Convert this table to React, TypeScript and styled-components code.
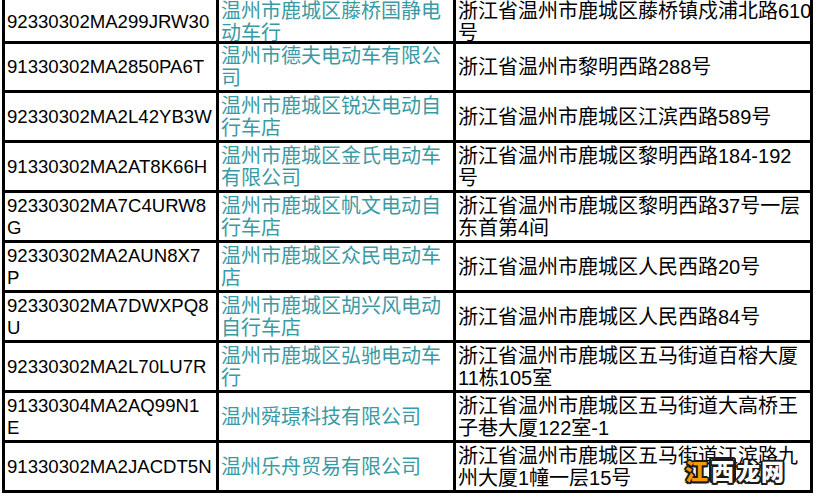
import React from 'react';
import styled, { createGlobalStyle } from 'styled-components';

interface Company {
    code: string;
    name: string;
    address: string;
}

// line breaks follow the wrapping of the original sheet
const companies: Company[] = [
    {
        code: '92330302MA299JRW30',
        name: '温州市鹿城区藤桥国静电\n动车行',
        address: '浙江省温州市鹿城区藤桥镇戍浦北路610\n号',
    },
    { code: '91330302MA2850PA6T', name: '温州市德夫电动车有限公\n司', address: '浙江省温州市黎明西路288号' },
    { code: '92330302MA2L42YB3W', name: '温州市鹿城区锐达电动自\n行车店', address: '浙江省温州市鹿城区江滨西路589号' },
    {
        code: '91330302MA2AT8K66H',
        name: '温州市鹿城区金氏电动车\n有限公司',
        address: '浙江省温州市鹿城区黎明西路184-192\n号',
    },
    {
        code: '92330302MA7C4URW8\nG',
        name: '温州市鹿城区帆文电动自\n行车店',
        address: '浙江省温州市鹿城区黎明西路37号一层\n东首第4间',
    },
    { code: '92330302MA2AUN8X7\nP', name: '温州市鹿城区众民电动车\n店', address: '浙江省温州市鹿城区人民西路20号' },
    { code: '92330302MA7DWXPQ8\nU', name: '温州市鹿城区胡兴风电动\n自行车店', address: '浙江省温州市鹿城区人民西路84号' },
    {
        code: '92330302MA2L70LU7R',
        name: '温州市鹿城区弘驰电动车\n行',
        address: '浙江省温州市鹿城区五马街道百榕大厦\n11栋105室',
    },
    {
        code: '91330304MA2AQ99N1\nE',
        name: '温州舜璟科技有限公司',
        address: '浙江省温州市鹿城区五马街道大高桥王\n子巷大厦122室-1',
    },
    {
        code: '91330302MA2JACDT5N',
        name: '温州乐舟贸易有限公司',
        address: '浙江省温州市鹿城区五马街道江滨路九\n州大厦1幢一层15号',
    },
];

// first row is cut off by the top of the screenshot
const rowHeight = (index: number) => (index === 0 ? 41 : index === 1 ? 46 : 47);

const App = () => (
    <>
        <GlobalStyle />
        <Page>
            <Table>
                {companies.map((c, i) => (
                    <Row key={c.code} $height={rowHeight(i)}>
                        <Cell $cut={i === 0}>
                            <CodeText>{c.code}</CodeText>
                        </Cell>
                        <Cell $cut={i === 0}>
                            <NameText>{c.name}</NameText>
                        </Cell>
                        <Cell $cut={i === 0}>
                            <AddressText>{c.address}</AddressText>
                        </Cell>
                    </Row>
                ))}
            </Table>
            <Watermark>
                <Mark $color="#f39a0b">江</Mark>
                <BoxMark>西</BoxMark>
                <Mark $color="#ffffff">龙</Mark>
                <Mark $color="#ffffff">网</Mark>
            </Watermark>
        </Page>
    </>
);
export default App;

const GlobalStyle = createGlobalStyle`
    html, body {
        margin: 0;
        padding: 0;
        background: #ffffff;
    }
`;

const Page = styled.div`
    position: relative;
    width: 819px;
    height: 501px;
    overflow: hidden;
    padding-left: 2px;
    box-sizing: border-box;
    background: #ffffff;
`;

const Table = styled.div`
    display: flex;
    flex-direction: column;
    gap: 3px;
    width: 811px;
    padding: 0 3px 3px 3px;
    box-sizing: border-box;
    background: #000000;
`;

const Row = styled.div<{ $height: number }>`
    display: grid;
    grid-template-columns: 211px 234px 354px;
    column-gap: 3px;
    height: ${(props) => props.$height}px;
`;

const Cell = styled.div<{ $cut: boolean }>`
    display: flex;
    align-items: center;
    background: #ffffff;
    padding: ${(props) => (props.$cut ? '3px 2px 0 2px' : '0 2px')};
    overflow: hidden;
    box-sizing: border-box;
`;

const CodeText = styled.div`
    font-family: 'Liberation Sans', Arial, sans-serif;
    font-size: 18.6px;
    line-height: 22px;
    color: #000000;
    white-space: pre;
`;

const NameText = styled.div`
    font-family: 'Liberation Sans', 'Noto Sans CJK SC', sans-serif;
    font-size: 20px;
    line-height: 22px;
    color: #3a9aa4;
    white-space: pre;
`;

const AddressText = styled(NameText)`
    color: #000000;
`;

const Watermark = styled.div`
    position: absolute;
    left: 685px;
    top: 457px;
    display: flex;
    align-items: center;
    gap: 1px;
    font-family: 'Noto Sans CJK SC', sans-serif;
    font-weight: 900;
    font-size: 23px;
    line-height: 26px;
`;

const outline = `
    -1.5px -1.5px 0 #1a1a1a, 1.5px -1.5px 0 #1a1a1a, -1.5px 1.5px 0 #1a1a1a, 1.5px 1.5px 0 #1a1a1a,
    0 -2px 0 #1a1a1a, 0 2px 0 #1a1a1a, -2px 0 0 #1a1a1a, 2px 0 0 #1a1a1a
`;

const Mark = styled.span<{ $color: string }>`
    color: ${(props) => props.$color};
    text-shadow: ${outline};
`;

const BoxMark = styled.span`
    color: #ffffff;
    background: #f39a0b;
    border: 2px solid #1a1a1a;
    border-radius: 3px;
    line-height: 22px;
    text-shadow: ${outline};
`;
